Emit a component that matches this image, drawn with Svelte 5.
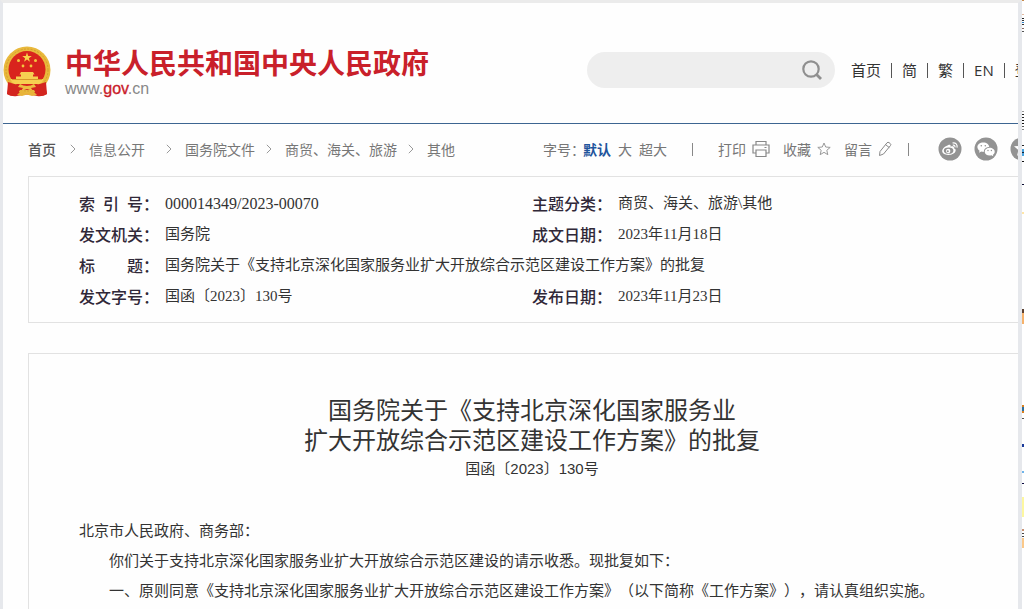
<script>
  const crumbs = ['信息公开', '国务院文件', '商贸、海关、旅游', '其他'];
  const languages = ['简', '繁', 'EN', '登录'];
  const body = [
    '你们关于支持北京深化国家服务业扩大开放综合示范区建设的请示收悉。现批复如下：',
    '一、原则同意《支持北京深化国家服务业扩大开放综合示范区建设工作方案》（以下简称《工作方案》），请认真组织实施。'
  ];
  // Slivers of the neighbouring window: top, height, colour
  const slivers = [
    [0, 1, '#c98a4a'], [14, 1, '#e3b9a0'], [18, 1, '#222'], [20, 1, '#333'], [22, 1, '#2b7fc4'], [24, 1, '#333'], [28, 1, '#8a6a60'], [31, 1, '#555'],
    [111, 1, '#999'], [114, 1, '#222'], [117, 1, '#222'], [120, 1, '#111'], [123, 1, '#111'], [126, 1, '#555'], [129, 1, '#888'],
    [145, 1, '#222'], [149, 7, '#4aa3df'], [152, 1, '#123'], [161, 1, '#111'], [184, 1, '#0a0a30'],
    [212, 2, '#ffe6a8'], [309, 4, '#5a4030'], [313, 11, '#f6b26b'],
    [405, 8, '#d98020'], [407, 4, '#2b6f9f'], [418, 1, '#555'], [444, 3, '#1a3a9a'], [471, 2, '#6fb4ea'], [483, 1, '#0a0a40'],
    [497, 20, '#fdf7a0'], [529, 2, '#c99070'], [533, 1, '#444'], [536, 1, '#444'], [538, 10, '#fbc98a']
  ];
</script>

<div class="desktop">
  <div class="page">
    <header class="masthead">
      <a class="brand" href="#home">
        <svg class="emblem" viewBox="0 0 48 52" aria-hidden="true">
          <path d="M7 35L4 48q5 3 10 2 10-3 20 0 5 1 10-2l-3-13z" fill="#d3251f" />
          <circle cx="24" cy="24" r="23.500" fill="#e9b93c" />
          <circle cx="24" cy="24" r="21" fill="none" stroke="#d59d2c" stroke-width="1" stroke-dasharray="2 1.400" />
          <circle cx="24" cy="23.500" r="18.500" fill="#d9241d" />
          <path d="M24 6.500l1.200 3.400 3.600.1-2.900 2.200 1 3.500-2.900-2.100-2.900 2.100 1-3.500-2.900-2.200 3.600-.1z" fill="#f8d34a" />
          <g fill="#f3c63f"><circle cx="15.500" cy="14.500" r="1.500" /><circle cx="32.500" cy="14.500" r="1.500" /><circle cx="20" cy="20" r="1.400" /><circle cx="28" cy="20" r="1.400" /></g>
          <path d="M18 26h12l1.500 2.500H30v2h5V33h5.500q-1 3-3 5h-27q-2-2-3-5H13v-2.500h5v-2h-1.500z" fill="#f6cf51" />
          <path d="M9 33.500h30" stroke="#d9982a" />
          <path d="M5 36q8 3 14 3h10q6 0 14-3l1 12q-4 3-10 1l-3-5H17l-3 5q-6 2-10-1z" fill="#d3251f" />
          <path d="M17 38q3 2 7 2t7-2l2 3-5 1 2 3-6-2-6 2 2-3-5-1z" fill="#edbd42" />
          <path d="M14 49l4-4 6 2 6-2 4 4-5 1-5-1.500L19 50z" fill="#e8b43a" />
        </svg>
        <span class="names">
          <strong>中华人民共和国中央人民政府</strong>
          <span class="domain">www.<b>gov</b>.cn</span>
        </span>
      </a>
      <form class="search" role="search">
        <input type="search" aria-label="搜索" />
        <button type="button" aria-label="搜索">
          <svg viewBox="0 0 20 20" width="20" height="20" fill="none" stroke="#8f8f8f" stroke-width="2.200"><circle cx="9" cy="9" r="7.700" /><path d="M14.500 14.500L19 19" stroke-width="2.800" /></svg>
        </button>
      </form>
      <nav class="languages">
        <a href="#home">首页</a>
        {#each languages as item}<i></i><a href="#lang">{item}</a>{/each}
      </nav>
    </header>

    <div class="toolbar">
      <nav class="crumbs">
        <a class="home" href="#home">首页</a>
        {#each crumbs as item, n}
          <svg class:wide={n === 1} viewBox="0 0 6 10" width="6" height="10" fill="none" stroke="#999" aria-hidden="true"><path d="M.8.8L5 5 .8 9.200" /></svg>
          <a href="#crumb">{item}</a>
        {/each}
      </nav>
      <div class="tools">
        <div class="sizes"><span>字号：</span><button class="active">默认</button><button>大</button><button>超大</button></div>
        <i></i>
        <div class="actions">
          <button>打印
            <svg viewBox="0 0 18 18" width="18" height="18" fill="none" stroke="#888" stroke-width="1.200"><path d="M4 5V1.500h10V5M4 13H1V5h16v8h-3M4 10h10v6.500H4zM12.500 7.500h2" /></svg>
          </button>
          <button>收藏
            <svg viewBox="0 0 14 14" width="14" height="14" fill="none" stroke="#999"><path d="M7 1l1.700 4 4.500.4-3.400 2.900 1 4.400L7 10.300l-3.800 2.400 1-4.400L.8 5.400 5.300 5z" /></svg>
          </button>
          <button>留言
            <svg viewBox="0 0 14 16" width="14" height="16" fill="none" stroke="#888"><path d="M1.500 14.500L2 10.500 9 1.800q1-1 2-.2l1.300 1q1 .8.200 1.900L5.500 13zM7.500 3.600l3.800 3" /></svg>
          </button>
        </div>
        <i></i>
        <div class="share">
          <a href="#weibo" aria-label="微博">
            <svg viewBox="0 0 24 24" width="24" height="24"><circle cx="12" cy="12" r="11.500" fill="#939393" /><path d="M10 8.200c1.800-.8 3-.2 2.600 1.500 2-.8 3.900-.3 3.300 1.600 1.500.5 2 1.500 1.700 2.700-.6 2.500-4 4-7.300 3.900-3.600-.1-6.200-1.700-6.100-4.200.1-2 3-4.700 5.800-5.500z" fill="#fff" /><ellipse cx="10.600" cy="13.700" rx="4.800" ry="3.100" fill="#939393" /><circle cx="10.200" cy="14" r="2.200" fill="#fff" /><circle cx="9.800" cy="14.300" r="1" fill="#939393" /><path d="M14.500 6c3-.7 5.300 1.600 4.500 4.700M14.800 8.200c1.500-.3 2.500.8 2.100 2.200" fill="none" stroke="#fff" stroke-width="1.200" /></svg>
          </a>
          <a href="#wechat" aria-label="微信">
            <svg viewBox="0 0 24 24" width="24" height="24"><circle cx="12" cy="12" r="11.500" fill="#939393" /><path d="M9.300 5.500c3.300 0 5.800 2 5.900 4.500-3.200.1-5.500 2-5.200 4.800-1 .1-1.900 0-2.700-.2L5 15.700l.6-2c-1.400-1-2.200-2.200-2.200-3.700 0-2.500 2.600-4.500 5.900-4.500z" fill="#fff" /><path d="M15.700 10.800c2.800 0 5 1.700 5 3.900 0 1.200-.7 2.300-1.800 3l.4 1.600-1.800-1c-3.500.9-6.800-.8-6.800-3.600 0-2.200 2.200-3.900 5-3.900z" fill="#fff" /><g fill="#939393"><circle cx="7.300" cy="8.800" r=".8" /><circle cx="11.300" cy="8.800" r=".8" /><circle cx="14" cy="13.500" r=".7" /><circle cx="17.400" cy="13.500" r=".7" /></g></svg>
          </a>
          <a href="#share" aria-label="分享">
            <svg viewBox="0 0 24 24" width="24" height="24"><circle cx="12" cy="12" r="11.500" fill="#939393" /><path d="M12 3.500l2.200 5.300 5.800.5-4.400 3.800 1.400 5.700-5-3.100-5 3.100 1.400-5.700L4 9.300l5.800-.5z" fill="#fff" /></svg>
          </a>
        </div>
      </div>
    </div>

    <dl class="meta">
      <div><dt><span>索</span><span>引</span><span>号：</span></dt><dd class="code">000014349/2023-00070</dd></div>
      <div><dt>主题分类：</dt><dd>商贸、海关、旅游\其他</dd></div>
      <div><dt>发文机关：</dt><dd>国务院</dd></div>
      <div><dt>成文日期：</dt><dd>2023年11月18日</dd></div>
      <div class="full"><dt><span>标</span><span>题：</span></dt><dd>国务院关于《支持北京深化国家服务业扩大开放综合示范区建设工作方案》的批复</dd></div>
      <div><dt>发文字号：</dt><dd>国函〔2023〕130号</dd></div>
      <div><dt>发布日期：</dt><dd>2023年11月23日</dd></div>
    </dl>

    <article>
      <h1>国务院关于《支持北京深化国家服务业<br />扩大开放综合示范区建设工作方案》的批复</h1>
      <p class="number">国函〔2023〕130号</p>
      <p class="addressee">北京市人民政府、商务部：</p>
      {#each body as text}<p>{text}</p>{/each}
    </article>
  </div>
  <div class="neighbour" aria-hidden="true">
    <svg width="2" height="609" shape-rendering="crispEdges">
      {#each slivers as [y, h, fill]}<rect x="0" {y} width="2" height={h} {fill} />{/each}
    </svg>
  </div>
</div>

<style>
  :global(body) { margin: 0; background: #fff; overflow: hidden; }
  .desktop {
    display: flex;
    height: 100vh;
    overflow: hidden;
    font-family: "Noto Sans CJK SC", sans-serif;
    text-spacing-trim: space-all;
    color: #333;
  }
  .page {
    flex: 1;
    min-width: 0;
    overflow: hidden;
    border: solid #e6e8ec;
    border-width: 3px 4px 0 3px;
    border-top-color: #ebebeb;
    background: #fefefe;
  }
  .neighbour { width: 2px; background: #fff; overflow: hidden; }
  .neighbour svg { display: block; }
  a { color: inherit; text-decoration: none; }
  button { padding: 0; border: 0; background: none; font: inherit; color: inherit; white-space: nowrap; }
  svg { flex: none; }

  .masthead {
    display: flex;
    align-items: center;
    height: 120px;
    border-bottom: 1px solid #3d6591;
    white-space: nowrap;
  }
  .brand { display: flex; align-items: center; gap: 14px; padding-top: 17px; }
  .emblem { width: 48px; height: 52px; }
  .names { display: flex; flex-direction: column; }
  .names strong { font-size: 28px; line-height: 34px; color: #c9202a; }
  .domain { font: 16px/20px "Liberation Sans", sans-serif; color: #888; }
  .domain b { font-weight: 400; color: #c9202a; -webkit-text-stroke: thin #c9202a; }
  .search {
    display: flex;
    align-items: center;
    width: 248px;
    height: 36px;
    margin: 13px 16px 0 auto;
    border-radius: 18px;
    background: #eee;
  }
  .search input { flex: 1; min-width: 0; padding: 0 16px; border: 0; outline: 0; background: none; font: inherit; }
  .search button { display: flex; margin-right: 13px; }
  .languages {
    display: flex;
    align-items: center;
    gap: 10px;
    width: 167px;
    margin-top: 14px;
    overflow: hidden;
    font: 15px/22px "Open Sans", "Noto Sans CJK SC", sans-serif;
  }
  .languages a { flex: none; }
  .languages i { flex: none; width: 1px; height: 15px; background: #555; }

  .toolbar { display: flex; align-items: center; height: 50px; padding-bottom: 2px; font-size: 14px; line-height: 20px; color: #777; white-space: nowrap; }
  .crumbs { display: flex; align-items: center; margin-left: 25px; }
  .crumbs svg { margin: 0 13px 0 11px; }
  .crumbs .home + svg { margin-left: 14px; }
  .crumbs svg.wide { margin-left: 21px; }
  .crumbs .home { font-weight: 500; color: #555; }
  .tools { display: flex; align-items: center; width: 475px; margin-left: auto; }
  .tools > i { flex: none; width: 1px; height: 13px; background: #888; }
  .sizes { display: flex; flex: none; gap: 7px; width: 149px; }
  .sizes span { margin-right: -9px; }
  .sizes .active { font-weight: 700; color: #1f549c; }
  .actions { display: flex; flex: none; gap: 13px; margin: 0 16px 0 25px; }
  .actions button { display: flex; align-items: center; gap: 6px; }
  .share { display: flex; flex: none; gap: 12px; margin-left: 29px; }
  .share svg { display: block; }

  .meta {
    display: grid;
    grid-template-columns: 453px 1fr;
    margin: 0 -18px 0 25px;
    padding: 11px 0 10px 50px;
    border: 1px solid #e2e2e2;
    font: 15px/31px "Liberation Serif", "Noto Sans CJK SC", serif;
  }
  .meta div { display: flex; white-space: nowrap; }
  .meta .full { grid-column: 1 / -1; }
  .meta dt {
    display: flex;
    justify-content: space-between;
    width: 80px;
    margin-right: 6px;
    font: 500 16px/30px "Noto Sans CJK SC", sans-serif;
    color: #302838;
  }
  .meta dd { margin: 0; }
  .meta .code { font-size: 16px; }

  article {
    margin: 30px -18px 0 25px;
    padding: 40px 50px 20px;
    border: 1px solid #e2e2e2;
    font-size: 15px;
    line-height: 30px;
  }
  h1 { margin: 0; font-size: 24px; font-weight: 400; line-height: 30px; text-align: center; }
  p { margin: 0; text-indent: 2em; white-space: nowrap; }
  .number { text-indent: 0; text-align: center; font-family: "Liberation Sans", "Noto Sans CJK SC", sans-serif; }
  .addressee { margin-top: 31px; text-indent: 0; }
</style>
